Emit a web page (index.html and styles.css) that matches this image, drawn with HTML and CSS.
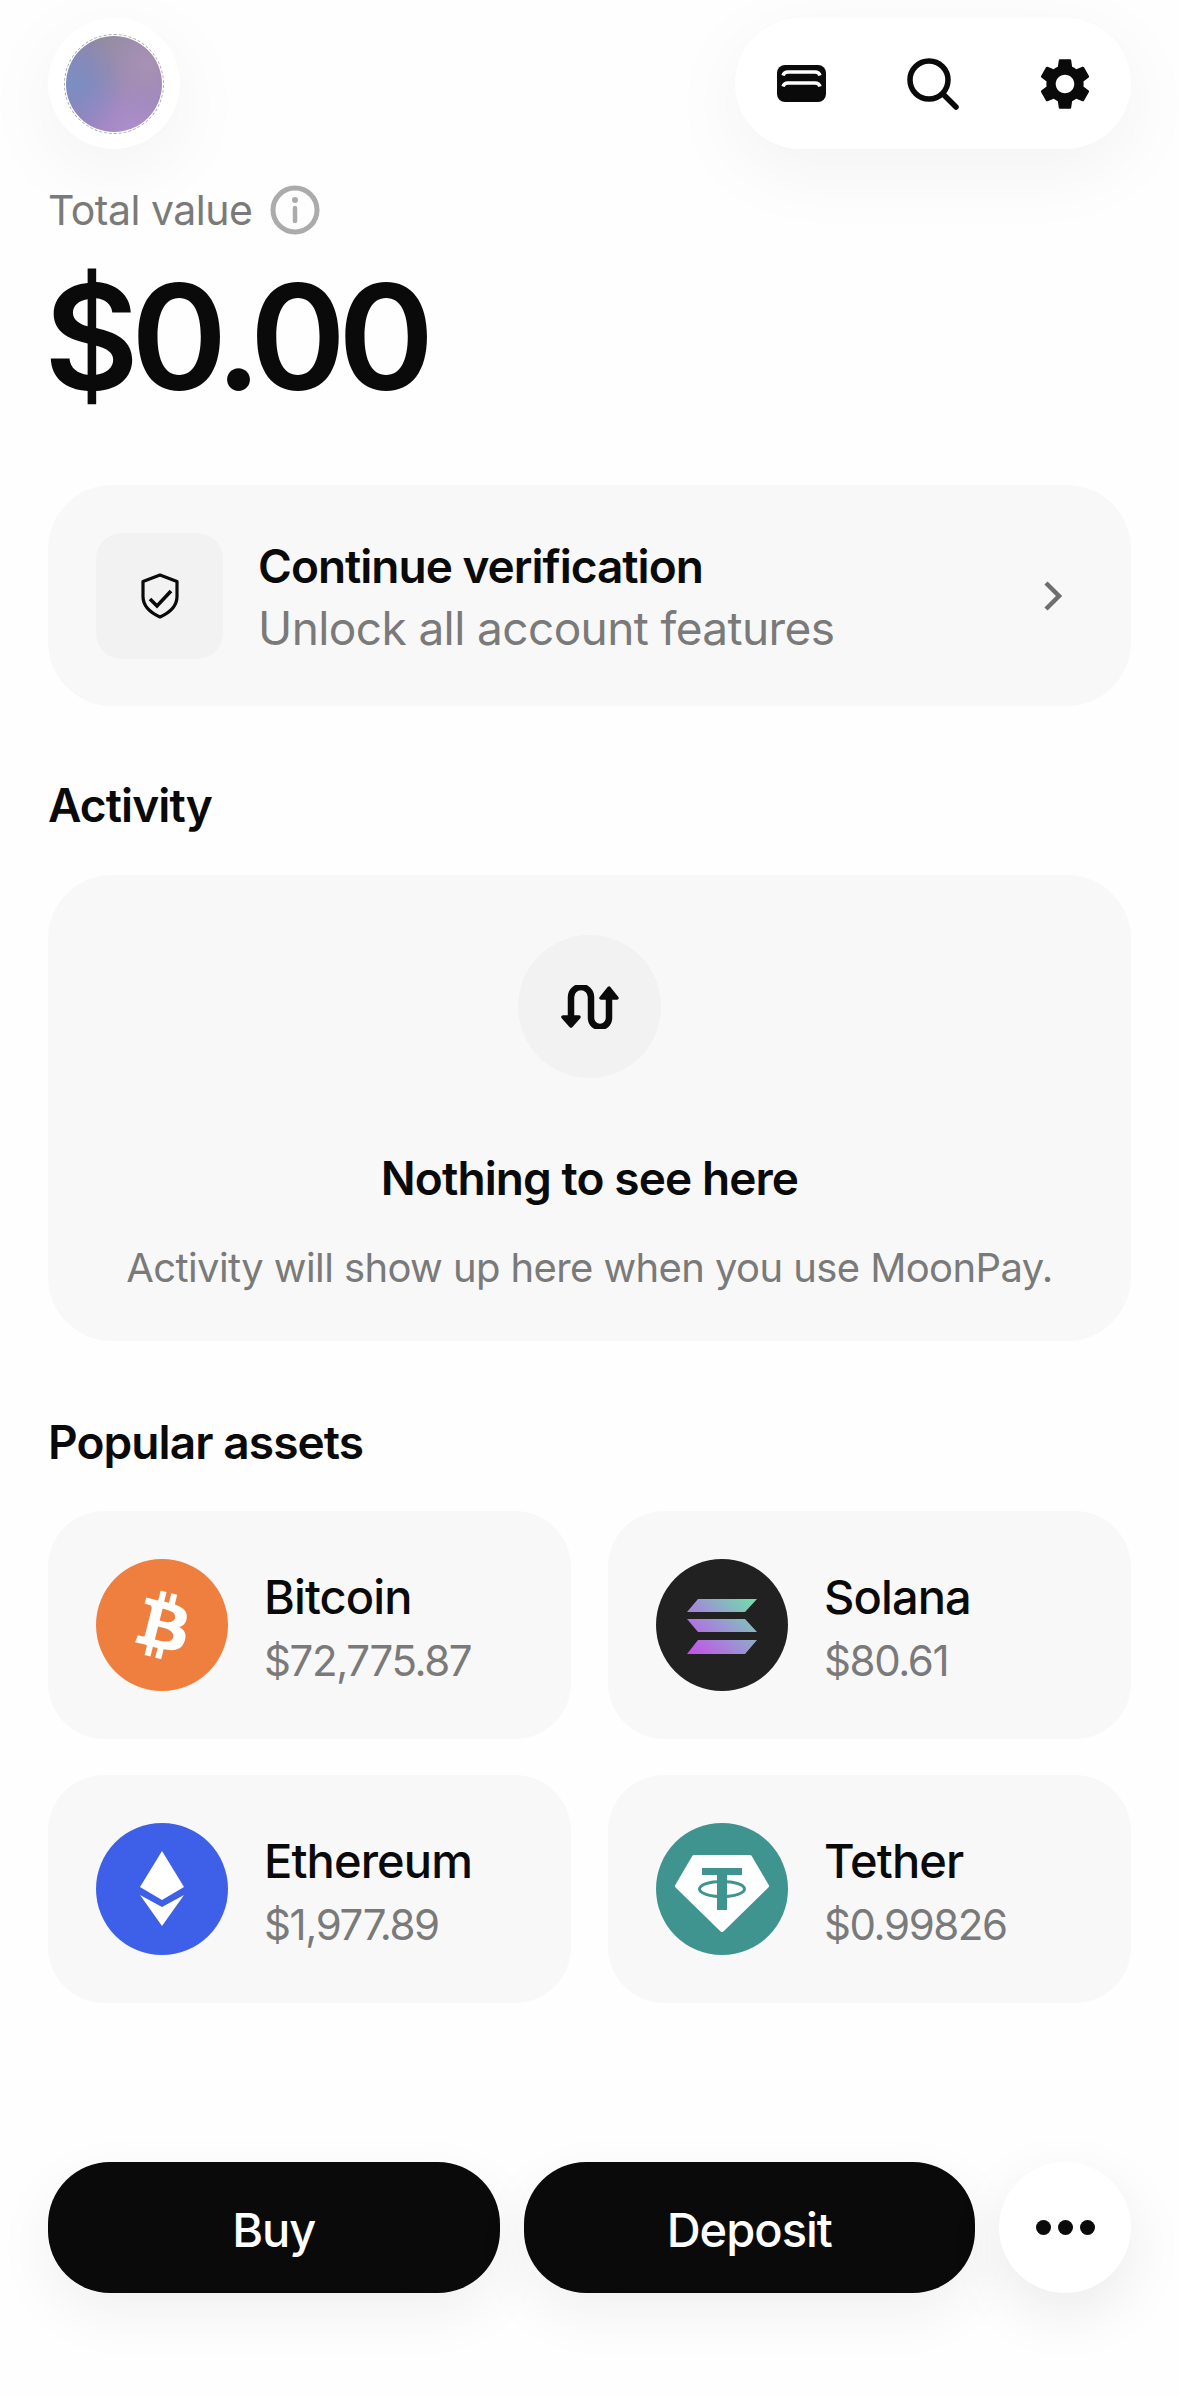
FILE: index.html
```html
<!DOCTYPE html>
<html>
    <head>
        <link rel="stylesheet" href="styles.css">
        <title>MoonPay</title>
    </head>
    <body>
        <div class="page">
            <div class="topBar">
                <div class="avatarButton"><div class="avatar"></div></div>
                <div class="topActions">
                    <div class="topAction">
                        <svg width="49" height="37" viewBox="0 0 49 37">
                            <rect width="49" height="37" rx="8" fill="#0a0a0a"/>
                            <path d="M6 10.5q1-3.500 5-3.500h27q4 0 5 3.500M6 21.500q1-3.500 5-3.500h27q4 0 5 3.500" fill="none" stroke="#fff" stroke-width="3.500"/>
                        </svg>
                    </div>
                    <div class="topAction">
                        <svg width="52" height="52" viewBox="0 0 52 52">
                            <circle cx="22" cy="22" r="19" fill="none" stroke="#0a0a0a" stroke-width="5.500"/>
                            <path d="M36 36l13 13" fill="none" stroke="#0a0a0a" stroke-width="5.500" stroke-linecap="round"/>
                        </svg>
                    </div>
                    <div class="topAction">
                        <svg width="62" height="62" viewBox="0 0 24 24">
                            <path fill="#0a0a0a" d="M19.140 12.940c.040-.300.060-.610.060-.940 0-.320-.020-.640-.070-.940l2.030-1.580c.180-.140.230-.410.120-.610l-1.920-3.320c-.120-.220-.370-.290-.590-.220l-2.390.960c-.500-.380-1.030-.700-1.620-.940l-.360-2.540c-.040-.240-.240-.410-.480-.410h-3.840c-.240 0-.430.170-.470.410l-.360 2.540c-.590.240-1.130.570-1.620.940l-2.390-.960c-.220-.080-.470 0-.590.220L2.740 8.870c-.120.210-.080.470.120.610l2.030 1.580c-.050.300-.090.630-.090.940s.020.640.07.940l-2.030 1.580c-.180.140-.230.410-.12.610l1.920 3.320c.120.220.370.290.590.220l2.390-.960c.500.380 1.030.700 1.620.940l.360 2.540c.050.240.240.410.480.410h3.840c.240 0 .440-.170.470-.410l.360-2.540c.590-.240 1.130-.560 1.620-.940l2.390.960c.220.080.470 0 .590-.220l1.920-3.320c.120-.220.070-.470-.120-.610l-2.010-1.580zM12 15.600c-1.980 0-3.600-1.620-3.600-3.600s1.620-3.600 3.600-3.600 3.600 1.620 3.600 3.600-1.620 3.600-3.600 3.600z"/>
                        </svg>
                    </div>
                </div>
            </div>

            <div class="totalRow">
                <span class="totalLabel">Total value</span>
                <svg width="50" height="50" viewBox="0 0 50 50">
                    <circle cx="25" cy="25" r="22" fill="none" stroke="#ababab" stroke-width="5"/>
                    <circle cx="25" cy="15" r="3" fill="#ababab"/>
                    <path d="M25 23v13" stroke="#ababab" stroke-width="4.500" stroke-linecap="round"/>
                </svg>
            </div>
            <div class="totalAmount">$0.00</div>

            <div class="verifyCard">
                <div class="verifyIcon">
                    <svg width="38" height="46" viewBox="0 0 38 46">
                        <path d="M19 2l17 6.500v15c0 9-7 16-17 20.500C9 39.500 2 32.500 2 23.500v-15z" fill="none" stroke="#0a0a0a" stroke-width="3.200" stroke-linejoin="round"/>
                        <path d="M9 26l7 7 14-15" fill="none" stroke="#0a0a0a" stroke-width="3.600"/>
                    </svg>
                </div>
                <div class="verifyText">
                    <div class="verifyTitle">Continue verification</div>
                    <div class="verifySub">Unlock all account features</div>
                </div>
                <svg width="20" height="32" viewBox="0 0 20 32">
                    <path d="M3 3l13 13L3 29" fill="none" stroke="#6f6f6f" stroke-width="4.500"/>
                </svg>
            </div>

            <div class="sectionTitle activityTitle">Activity</div>
            <div class="activityCard">
                <div class="activityIcon">
                    <svg width="60" height="44" viewBox="0 0 60 44">
                        <path d="M11 33V12a10 10 0 0 1 20 0v21a9 9 0 0 0 18 0V5" fill="none" stroke="#0a0a0a" stroke-width="6.500"/>
                        <path d="M3 32h16l-8 9zM41 13h16l-8-10z" fill="#0a0a0a" stroke="#0a0a0a" stroke-width="3.500" stroke-linejoin="round"/>
                    </svg>
                </div>
                <div class="activityTitleText">Nothing to see here</div>
                <div class="activitySub">Activity will show up here when you use MoonPay.</div>
            </div>

            <div class="sectionTitle assetsTitle">Popular assets</div>
            <div class="assetGrid">
                <div class="assetCard">
                    <div class="assetIcon bitcoin">
                        <svg width="110" height="110" viewBox="0 0 32 32">
                            <path fill="#fff" d="M23.189 14.020c.314-2.096-1.283-3.223-3.465-3.975l.708-2.840-1.728-.430-.690 2.765c-.454-.114-.920-.220-1.385-.326l.695-2.783L15.596 6l-.708 2.839c-.376-.086-.746-.170-1.104-.260l.002-.009-2.384-.595-.460 1.846s1.283.294 1.256.312c.700.175.826.638.805 1.006l-.806 3.235c.048.012.110.030.180.057l-.183-.045-1.130 4.532c-.086.212-.303.531-.793.410.018.025-1.256-.313-1.256-.313l-.858 1.978 2.250.561c.418.105.828.215 1.231.318l-.715 2.872 1.727.430.708-2.840c.472.127.930.245 1.378.357l-.706 2.828 1.728.430.715-2.866c2.948.558 5.164.333 6.097-2.333.752-2.146-.037-3.385-1.588-4.192 1.130-.260 1.980-1.003 2.207-2.538zm-3.950 5.538c-.533 2.147-4.148.986-5.320.695l.950-3.805c1.172.293 4.929.872 4.370 3.110zm.535-5.569c-.487 1.953-3.495.960-4.470.717l.860-3.450c.975.243 4.118.696 3.610 2.733z"/>
                        </svg>
                    </div>
                    <div class="assetText">
                        <div class="assetName">Bitcoin</div>
                        <div class="assetPrice">$72,775.87</div>
                    </div>
                </div>
                <div class="assetCard">
                    <div class="assetIcon solana">
                        <svg width="132" height="132" viewBox="0 0 132 132">
                            <defs>
                                <linearGradient id="solGrad" gradientUnits="userSpaceOnUse" x1="35" y1="100" x2="98" y2="36">
                                    <stop offset="0" stop-color="#c64de8"/>
                                    <stop offset="0.5" stop-color="#9b95d4"/>
                                    <stop offset="1" stop-color="#6ce5a6"/>
                                </linearGradient>
                            </defs>
                            <path fill="url(#solGrad)" d="M42 40h59L89 53H31zM31 60h58l12 13H42zM42 81h59L89 95H31z"/>
                        </svg>
                    </div>
                    <div class="assetText">
                        <div class="assetName">Solana</div>
                        <div class="assetPrice">$80.61</div>
                    </div>
                </div>
                <div class="assetCard">
                    <div class="assetIcon ethereum">
                        <svg width="132" height="132" viewBox="0 0 132 132">
                            <path fill="#fff" d="M66 28l22 36-22 13-22-13zM44 72l22 12 22-12-22 31z"/>
                        </svg>
                    </div>
                    <div class="assetText">
                        <div class="assetName">Ethereum</div>
                        <div class="assetPrice">$1,977.89</div>
                    </div>
                </div>
                <div class="assetCard">
                    <div class="assetIcon tether">
                        <svg width="132" height="132" viewBox="0 0 132 132">
                            <path fill="#fff" stroke="#fff" stroke-width="4" stroke-linejoin="round" d="M38 34h56l17 29-45 44-45-44z"/>
                            <path fill="#3f9490" d="M46 45h40v7H71v9h-10v-9H46zM61 70h10v17h-10z"/>
                            <ellipse cx="66" cy="66" rx="22.500" ry="7.500" fill="none" stroke="#3f9490" stroke-width="3"/>
                            <path fill="#3f9490" d="M61 60h10v12h-10z"/>
                        </svg>
                    </div>
                    <div class="assetText">
                        <div class="assetName">Tether</div>
                        <div class="assetPrice">$0.99826</div>
                    </div>
                </div>
            </div>

            <div class="bottomActions">
                <div class="darkButton">Buy</div>
                <div class="darkButton">Deposit</div>
                <div class="moreButton">
                    <span class="dot"></span><span class="dot"></span><span class="dot"></span>
                </div>
            </div>
        </div>
    </body>
</html>
```

FILE: styles.css
```css
html, body {
    margin: 0;
    background: #fefefe;
}
body {
    font-family: Inter, "Liberation Sans", sans-serif;
    color: #0a0a0a;
}
.page {
    height: 2396px;
    box-sizing: border-box;
    padding: 18px 48px 103px;
    display: flex;
    flex-direction: column;
    overflow: hidden;
}
.topBar {
    display: flex;
    justify-content: space-between;
}
.avatarButton {
    width: 132px;
    height: 131px;
    border-radius: 50%;
    background: #fff;
    box-shadow: 0 20px 80px rgba(0, 0, 0, 0.05);
    display: flex;
    align-items: center;
    justify-content: center;
}
.avatar {
    width: 96px;
    height: 96px;
    border-radius: 50%;
    outline: 1px dashed #aaa;
    outline-offset: 1px;
    background:
        radial-gradient(circle at 8% 50%, #7a8fc2 0, rgba(122, 143, 194, 0) 50%),
        radial-gradient(circle at 85% 30%, #a892b4 0, rgba(168, 146, 180, 0) 55%),
        radial-gradient(circle at 50% 0, #8f8d9c 0, rgba(147, 144, 159, 0) 60%),
        radial-gradient(circle at 70% 100%, #ae8fcb 0, rgba(174, 143, 203, 0) 60%),
        #9480bb;
}
.topActions {
    display: flex;
    background: #fff;
    border-radius: 66px;
    box-shadow: 0 20px 80px rgba(0, 0, 0, 0.05);
}
.topAction {
    width: 132px;
    height: 131px;
    display: flex;
    align-items: center;
    justify-content: center;
}
.totalRow {
    margin-top: 36px;
    display: flex;
    align-items: center;
    gap: 18px;
    height: 50px;
}
.totalLabel {
    font-size: 41px;
    color: #7a7a7a;
    letter-spacing: -0.5px;
}
.totalAmount {
    margin: 29px 0 0 -4px;
    font-size: 146px;
    line-height: 146px;
    font-weight: 600;
    letter-spacing: -8px;
}
.verifyCard {
    margin-top: 75px;
    height: 221px;
    box-sizing: border-box;
    padding: 0 68px 0 48px;
    background: #f8f8f8;
    border-radius: 64px;
    display: flex;
    align-items: center;
}
.verifyIcon {
    width: 127px;
    height: 126px;
    background: #f2f2f2;
    border-radius: 26px;
    display: flex;
    align-items: center;
    justify-content: center;
}
.verifyText {
    flex: 1;
    margin-left: 35px;
    padding-top: 3px;
}
.verifyTitle {
    font-size: 46px;
    line-height: 62px;
    font-weight: 600;
    letter-spacing: -1px;
}
.verifySub {
    font-size: 46px;
    line-height: 62px;
    color: #7a7a7a;
    letter-spacing: -0.6px;
}
.sectionTitle {
    font-size: 46px;
    line-height: 60px;
    font-weight: 600;
    letter-spacing: -0.9px;
}
.activityTitle {
    margin-top: 69px;
}
.activityCard {
    margin-top: 40px;
    height: 466px;
    box-sizing: border-box;
    padding-top: 60px;
    background: #f8f8f8;
    border-radius: 64px;
    display: flex;
    flex-direction: column;
    align-items: center;
}
.activityIcon {
    width: 143px;
    height: 143px;
    border-radius: 50%;
    background: #f2f2f2;
    display: flex;
    align-items: center;
    justify-content: center;
}
.activityTitleText {
    margin-top: 70px;
    font-size: 46px;
    line-height: 60px;
    font-weight: 600;
    letter-spacing: -0.9px;
}
.activitySub {
    margin-top: 30px;
    font-size: 40px;
    line-height: 60px;
    color: #7a7a7a;
    letter-spacing: -0.6px;
}
.assetsTitle {
    margin-top: 71px;
}
.assetGrid {
    margin-top: 39px;
    display: grid;
    grid-template-columns: 523px 523px;
    grid-auto-rows: 228px;
    gap: 36px 37px;
}
.assetCard {
    background: #f8f8f8;
    border-radius: 56px;
    padding-left: 48px;
    display: flex;
    align-items: center;
    gap: 36px;
}
.assetText {
    padding-top: 8px;
}
.assetIcon {
    width: 132px;
    height: 132px;
    border-radius: 50%;
    display: flex;
    align-items: center;
    justify-content: center;
}
.bitcoin {
    background: #ee7f3f;
}
.solana {
    background: #212121;
}
.ethereum {
    background: #3e60e8;
}
.tether {
    background: #3f9490;
}
.assetName {
    font-size: 47px;
    line-height: 64px;
    font-weight: 500;
    letter-spacing: -0.9px;
}
.assetPrice {
    font-size: 42px;
    line-height: 64px;
    color: #7a7a7a;
    letter-spacing: -1.4px;
}
.bottomActions {
    margin-top: auto;
    display: flex;
    gap: 24px;
}
.darkButton {
    flex: 1;
    height: 131px;
    box-sizing: border-box;
    padding-top: 3px;
    background: #0a0a0a;
    border-radius: 62px;
    color: #fff;
    font-size: 47px;
    font-weight: 500;
    letter-spacing: -1px;
    display: flex;
    align-items: center;
    justify-content: center;
    box-shadow: 0 20px 60px rgba(0, 0, 0, 0.06);
}
.moreButton {
    width: 132px;
    height: 131px;
    border-radius: 50%;
    background: #fff;
    box-shadow: 0 20px 60px rgba(0, 0, 0, 0.08);
    display: flex;
    align-items: center;
    justify-content: center;
    gap: 7px;
}
.dot {
    width: 15px;
    height: 15px;
    border-radius: 50%;
    background: #0a0a0a;
}
```
